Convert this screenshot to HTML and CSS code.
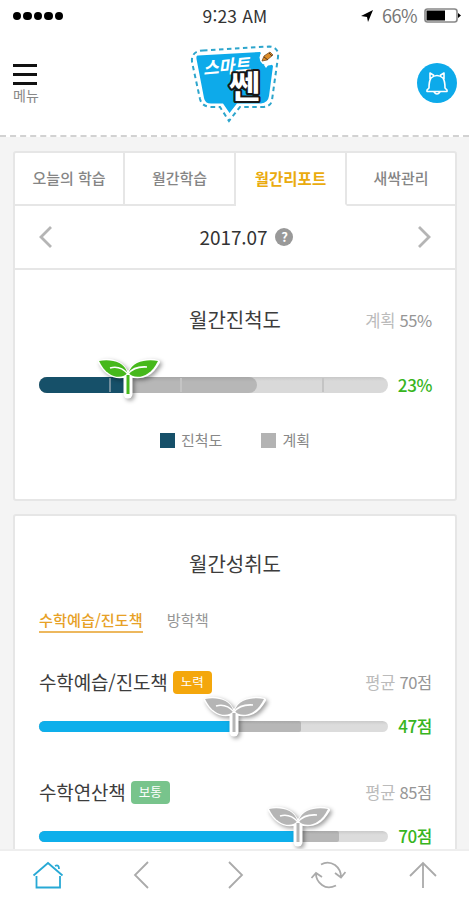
FILE: index.html
```html
<!DOCTYPE html>
<html lang="ko">
<head>
<meta charset="utf-8">
<title>스마트쎈</title>
<link rel="stylesheet" href="styles.css">
</head>
<body>
<svg class="defs" width="0" height="0">
  <symbol id="sprout" viewBox="0 0 66 46">
    <g class="outline">
      <path d="M4 5C14 2 28 5 31 18C18 22 10 16 4 5Z"/>
      <path d="M62 5C52 2 36 5 33 18C48 22 56 16 62 5Z"/>
      <path d="M32 18V37"/>
    </g>
    <path class="leaf" d="M3 4C14 2 28 4 31.500 16C27 22 12 23 3 4Z"/>
    <path class="leaf" d="M62 4C51 2 36 4 32.500 16C37 22 53 23 62 4Z"/>
    <path class="vein" d="M14 11Q24 8 32 17Q38 9 51 10"/>
    <path class="stem" d="M32 18V37"/>
  </symbol>
</svg>
<div class="app">
  <div class="status">
    <div class="signal"><i></i><i></i><i></i><i></i><i></i></div>
    <div class="clock">9:23 AM</div>
    <div class="power">
      <svg width="13" height="12" viewBox="0 0 13 12"><path d="M0 6L12 0L7 12L6 7Z"/></svg>
      <span>66%</span>
      <svg width="37" height="16" viewBox="0 0 37 16"><rect x="1" y="1" width="32" height="13" rx="2.500" fill="#fff" stroke="#888" stroke-width="1.600"/><rect x="2.500" y="2.500" width="18.500" height="10"/><path d="M34 5L37 7.500L34 10Z"/></svg>
    </div>
  </div>
  <header class="header">
    <div class="menu">
      <div class="burger"><i></i><i></i><i></i></div>
      <span>메뉴</span>
    </div>
    <svg class="logo" width="92" height="80" viewBox="0 0 92 80">
      <path d="M14 6.500L80 2.500Q90 3 89 13L83 56Q82 63 73 63H51L40 77L31 63H23Q13 63 11 55L3 18Q2 7 14 6.500Z" fill="#fff" stroke="#2da5cc" stroke-width="2" stroke-dasharray="4.500 3.500"/>
      <path d="M9 11.500Q7 11 7.500 15L15 54Q16 60 23 59.500H34L40.500 69L48 59.500H72Q79 59 80 52L84 22L71 8Z" fill="#0daaea"/>
      <ellipse cx="79" cy="13.500" rx="8.500" ry="8" fill="#fff"/>
      <path d="M75 21L77 24L80 20Z" fill="#fff"/>
      <path d="M73 17L75 12L81 8L84 11L78 16Z" fill="#dc8b27" stroke="#764d22" stroke-width=".8"/>
      <path d="M75 13L79 16M80 9L83 12" stroke="#543922"/>
      <text class="logo-small" transform="rotate(-5 38 25)" x="14" y="29" textLength="47" lengthAdjust="spacingAndGlyphs">스마트</text>
      <path d="M50 27.500L62 25.500" stroke="#fff" stroke-width="1.500"/>
      <text class="logo-big" x="40" y="54" textLength="31" lengthAdjust="spacingAndGlyphs">쎈</text>
    </svg>
    <div class="bell">
      <svg width="24" height="26" viewBox="0 0 24 26"><path d="M6 8Q4 11 4 18L2 20V21.500H22V20L20 18Q20 11 18 8Q12 3 6 8ZM5 9V3L9 5.500M15 5.500L19 3V9M9 22Q12 26 15 22"/></svg>
    </div>
  </header>
  <main class="content">
    <section class="card progress-card">
      <nav class="tabs">
        <a>오늘의 학습</a><a>월간학습</a><a class="active">월간리포트</a><a>새싹관리</a>
      </nav>
      <div class="month">
        <svg width="13" height="22" viewBox="0 0 13 22"><path d="M12 1L2 11L12 21"/></svg>
        <div class="month-label"><span>2017.07</span><b>?</b></div>
        <svg width="13" height="22" viewBox="0 0 13 22"><path d="M1 1L11 11L1 21"/></svg>
      </div>
      <div class="heading"><h2>월간진척도</h2><span class="plan"><em>계획</em> 55%</span></div>
      <div class="meter-row monthly">
        <div class="meter thick">
          <div class="target" style="width:62.5%"></div>
          <div class="fill" style="width:25.5%"></div>
          <i class="tick light" style="left:20%"></i><i class="tick" style="left:40.5%"></i><i class="tick" style="left:81%"></i>
          <svg class="sprout green" style="left:25.5%"><use href="#sprout"/></svg>
        </div>
        <strong>23%</strong>
      </div>
      <div class="legend"><span><i class="navy"></i>진척도</span><span><i></i>계획</span></div>
    </section>
    <section class="card score-card">
      <h2>월간성취도</h2>
      <nav class="books"><a class="active">수학예습/진도책</a><a>방학책</a></nav>
      <article class="score">
        <div class="score-head"><h3>수학예습/진도책</h3><span class="badge">노력</span><span class="plan"><em>평균</em> 70점</span></div>
        <div class="meter-row">
          <div class="meter">
            <div class="target" style="width:75%"></div>
            <div class="fill" style="width:55.8%"></div>
            <svg class="sprout" style="left:55.8%"><use href="#sprout"/></svg>
          </div>
          <strong>47점</strong>
        </div>
      </article>
      <article class="score">
        <div class="score-head"><h3>수학연산책</h3><span class="badge normal">보통</span><span class="plan"><em>평균</em> 85점</span></div>
        <div class="meter-row">
          <div class="meter">
            <div class="target" style="width:86%"></div>
            <div class="fill" style="width:74.3%"></div>
            <svg class="sprout" style="left:74.3%"><use href="#sprout"/></svg>
          </div>
          <strong>70점</strong>
        </div>
      </article>
    </section>
  </main>
  <nav class="toolbar">
    <svg class="home" viewBox="0 0 36 32"><path d="M3.500 16.500L18 4L32.500 16.500M6.500 17V28.500H30V17M25 7Q29 5 29 10"/></svg>
    <svg viewBox="0 0 36 32"><path d="M25 3L12 16L25 29"/></svg>
    <svg viewBox="0 0 36 32"><path d="M12 3L25 16L12 29"/></svg>
    <svg viewBox="0 0 36 32"><path d="M11 5.500Q18 1.500 25 6Q31 10.500 31 18M25 14L31 18.500L35.500 13M26 26.500Q18 30.500 12 26Q6 21.500 6 15M1.500 19L6 14L12 18"/></svg>
    <svg viewBox="0 0 36 32"><path d="M20 29V4M7 17L20 4L33 17"/></svg>
  </nav>
</div>
</body>
</html>
```
FILE: styles.css
```css
* { box-sizing: border-box; }
body { margin: 0; font-family: "Noto Sans CJK KR", sans-serif; color: #3c3c3c; }
h2, h3 { margin: 0; font-weight: 400; }
em, i { font-style: normal; }
.defs { position: absolute; }
.app { width: 469px; height: 900px; display: flex; flex-direction: column; overflow: hidden; background: #fff; }

.status { flex: none; height: 32px; padding: 0 8px 0 13px; display: grid; grid-template-columns: 1fr auto 1fr; align-items: center; }
.signal { display: flex; gap: 2px; }
.signal i { width: 8.400px; height: 8.400px; border-radius: 50%; background: #000; }
.clock { margin-left: -4px; font-size: 17.500px; line-height: 30px; letter-spacing: .15px; color: #333; padding-bottom: 1px; }
.power { display: flex; align-items: center; justify-content: flex-end; font-size: 18px; line-height: 30px; letter-spacing: -.5px; color: #777; }
.power span { margin: 0 7px 2px 8px; }

.header { flex: none; height: 105px; padding: 0 12px 0 13px; display: grid; grid-template-columns: 1fr auto 1fr; align-items: start; border-bottom: 2px dashed #d2d2d2; }
.menu { padding-top: 32px; color: #888; font-size: 14px; line-height: 19px; }
.menu span { display: block; margin-top: -1px; }
.burger { width: 24px; display: grid; gap: 6px; margin-bottom: 2px; }
.burger i { height: 3px; background: #111; }
.logo { margin: 12px 0 0 -1px; }
.logo-small { font-size: 18px; font-weight: 700; font-style: italic; fill: #fff; }
.logo-big { font-size: 32px; font-weight: 700; fill: #fff; stroke: #171717; stroke-width: 4px; paint-order: stroke; stroke-linejoin: round; }
.bell { justify-self: end; margin-top: 31px; width: 40px; height: 40px; border-radius: 50%; background: #0daaea; display: grid; place-items: center; }
.bell svg { fill: none; stroke: #fff; stroke-width: 1.600; stroke-linejoin: round; }

.content { flex: 1; min-height: 0; overflow: hidden; background: #f4f4f4; padding: 14px 12px 0 13px; }
.card { background: #fff; border: 2px solid #e6e6e6; border-radius: 3px; }
.progress-card { height: 350px; }
.tabs { display: grid; grid-template-columns: 110px 111px 111px 1fr; height: 53px; }
.tabs a { display: grid; place-items: center; padding-bottom: 2px; font-size: 15px; font-weight: 500; color: #858585; border-right: 2px solid #e6e6e6; border-bottom: 2px solid #e6e6e6; }
.tabs a:last-child { border-right: 0; }
.tabs .active { color: #eaab0e; font-size: 15.500px; font-weight: 700; border-bottom-color: #fff; }
.month { height: 64px; border-bottom: 2px solid #e6e6e6; display: flex; align-items: center; justify-content: space-between; padding: 0 24px; }
.month svg { fill: none; stroke: #b5b5b5; stroke-width: 2.800; }
.month-label { display: flex; align-items: center; gap: 8px; margin-left: 23px; font-size: 19px; letter-spacing: -.1px; color: #333; }
.month-label span { margin-top: -2px; }
.month-label b { width: 18px; height: 18px; border-radius: 50%; background: #999; color: #fff; font-size: 13px; line-height: 18px; text-align: center; }
.heading { position: relative; display: flex; justify-content: center; align-items: center; margin-top: 35px; height: 30px; }
h2 { font-size: 20px; line-height: 30px; text-align: center; }
.plan { font-size: 16.500px; letter-spacing: -.3px; color: #969696; }
.plan em { color: #bbb; }
.heading .plan { position: absolute; right: 23px; }

.meter-row { display: flex; align-items: center; justify-content: space-between; padding: 0 23px 0 24px; height: 24px; }
.monthly { margin-top: 38px; }
.meter { position: relative; width: 349px; height: 11px; border-radius: 8px; background: linear-gradient(#cacaca, #dcdcdc 35%); }
.meter.thick { height: 16px; background: linear-gradient(#c8c8c8, #d9d9d9 25%); }
.target, .fill { position: absolute; left: 0; top: 0; height: 100%; }
.target { background: linear-gradient(#a8a8a8, #b7b7b7 30%); border-radius: 8px 3px 3px 8px; }
.thick .target { border-radius: 8px; }
.fill { background: #0eafeb; border-radius: 8px 0 0 8px; }
.thick .fill { background: #165069; }
.tick { position: absolute; top: 1px; width: 2px; height: 14px; background: #c4c4c4; }
.tick.light { background: #718e9d; }
.sprout { position: absolute; width: 66px; height: 46px; margin-left: -32px; top: -26px; overflow: visible; filter: drop-shadow(2px 2px 2px rgba(0,0,0,.38)); color: #b5b5b5; }
.thick .sprout { top: -20px; color: #46b81b; }
.outline { fill: #fff; stroke: #fff; stroke-width: 4px; stroke-linejoin: round; stroke-linecap: round; }
.outline path:last-child { stroke-width: 9px; stroke-linecap: round; }
.leaf { fill: currentColor; }
.vein { fill: none; stroke: #fff; stroke-width: 1.600px; }
.stem { stroke: currentColor; stroke-width: 3px; }
.meter-row strong { margin-top: -2px; font-size: 17px; font-weight: 500; letter-spacing: -.4px; color: #38b51e; }
.legend { display: flex; gap: 39px; justify-content: center; margin: 33px 0 0; font-size: 15px; line-height: 20px; color: #888; }
.legend span { display: flex; align-items: center; gap: 6px; }
.legend i { width: 15px; height: 15px; background: #b3b3b3; }
.legend .navy { background: #165069; }

.score-card { margin-top: 13px; height: 400px; padding-top: 33px; }
.books { display: flex; gap: 24px; margin: 29px 0 0 24px; height: 26px; }
.books a { font-size: 15.200px; line-height: 22px; height: 25px; color: #969696; }
.books .active { color: #e7a126; font-weight: 500; border-bottom: 2px solid #edb85e; }
.score { height: 110px; padding-top: 32px; }
.score-head { display: flex; align-items: center; height: 34px; padding: 0 23px 0 24px; }
.score-head h3 { font-size: 19px; letter-spacing: -.15px; line-height: 28px; padding-bottom: 2px; }
.badge { width: 39px; height: 23px; margin: -1px 0 0 5px; border-radius: 4px; background: #f4a70c; color: #fff; font-size: 12.500px; line-height: 22px; text-align: center; }
.badge.normal { background: #78c48c; }
.score-head .plan { margin: -2px 0 0 auto; }
.score .meter-row { margin-top: 14px; }

.toolbar { flex: none; height: 51px; border-top: 2px solid #eee; background: #fff; display: flex; align-items: center; justify-content: space-between; padding: 0 30px 1px; }
.toolbar svg { width: 36px; height: 32px; fill: none; stroke: #aaa; stroke-width: 1.800; }
.toolbar .home { stroke: #28a9d5; }
```
